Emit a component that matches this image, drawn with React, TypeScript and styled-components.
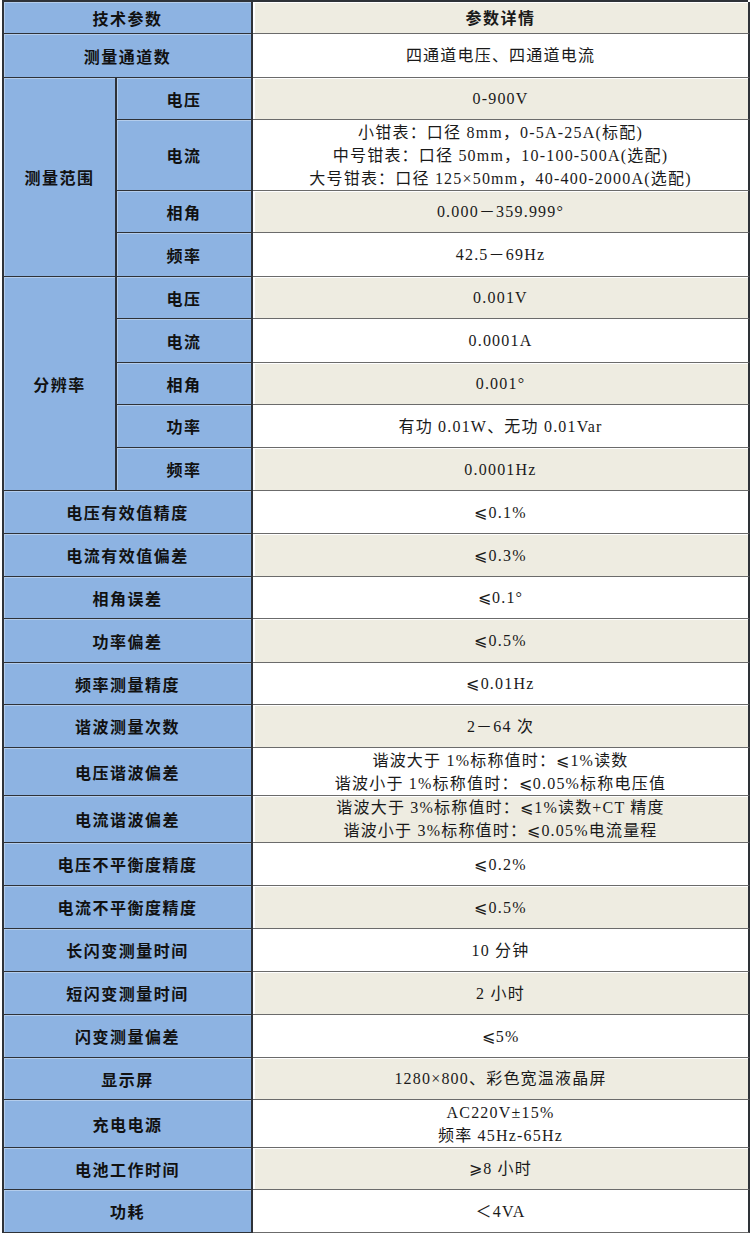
import styled, { createGlobalStyle } from "styled-components";

const COLORS = {
  blue: "#8DB3E2",
  beige: "#EEECE1",
  white: "#FFFFFF",
  line: "#2E3238",
  text: "#111111",
};

const GlobalStyle = createGlobalStyle`
  html, body {
    margin: 0;
    padding: 0;
    background: #ffffff;
  }
`;

// heights measured between the horizontal rules
const ROW_HEIGHTS = [
  32, 44, 42, 71, 42, 44, 42, 44, 42, 43, 43, 43, 43, 42, 44, 42, 43, 48, 47,
  43, 43, 43, 43, 43, 42, 48, 42, 43,
];

type Item = { label: string; value: string[] };
type Row =
  | ({ kind: "single" } & Item)
  | { kind: "group"; label: string; items: Item[] };

const ROWS: Row[] = [
  { kind: "single", label: "测量通道数", value: ["四通道电压、四通道电流"] },
  {
    kind: "group",
    label: "测量范围",
    items: [
      { label: "电压", value: ["0-900V"] },
      {
        label: "电流",
        value: [
          "小钳表：口径 8mm，0-5A-25A(标配)",
          "中号钳表：口径 50mm，10-100-500A(选配)",
          "大号钳表：口径 125×50mm，40-400-2000A(选配)",
        ],
      },
      { label: "相角", value: ["0.000－359.999°"] },
      { label: "频率", value: ["42.5－69Hz"] },
    ],
  },
  {
    kind: "group",
    label: "分辨率",
    items: [
      { label: "电压", value: ["0.001V"] },
      { label: "电流", value: ["0.0001A"] },
      { label: "相角", value: ["0.001°"] },
      { label: "功率", value: ["有功 0.01W、无功 0.01Var"] },
      { label: "频率", value: ["0.0001Hz"] },
    ],
  },
  { kind: "single", label: "电压有效值精度", value: ["⩽0.1%"] },
  { kind: "single", label: "电流有效值偏差", value: ["⩽0.3%"] },
  { kind: "single", label: "相角误差", value: ["⩽0.1°"] },
  { kind: "single", label: "功率偏差", value: ["⩽0.5%"] },
  { kind: "single", label: "频率测量精度", value: ["⩽0.01Hz"] },
  { kind: "single", label: "谐波测量次数", value: ["2－64 次"] },
  {
    kind: "single",
    label: "电压谐波偏差",
    value: ["谐波大于 1%标称值时：⩽1%读数", "谐波小于 1%标称值时：⩽0.05%标称电压值"],
  },
  {
    kind: "single",
    label: "电流谐波偏差",
    value: ["谐波大于 3%标称值时：⩽1%读数+CT 精度", "谐波小于 3%标称值时：⩽0.05%电流量程"],
  },
  { kind: "single", label: "电压不平衡度精度", value: ["⩽0.2%"] },
  { kind: "single", label: "电流不平衡度精度", value: ["⩽0.5%"] },
  { kind: "single", label: "长闪变测量时间", value: ["10 分钟"] },
  { kind: "single", label: "短闪变测量时间", value: ["2 小时"] },
  { kind: "single", label: "闪变测量偏差", value: ["⩽5%"] },
  { kind: "single", label: "显示屏", value: ["1280×800、彩色宽温液晶屏"] },
  { kind: "single", label: "充电电源", value: ["AC220V±15%", "频率 45Hz-65Hz"] },
  { kind: "single", label: "电池工作时间", value: ["⩾8 小时"] },
  { kind: "single", label: "功耗", value: ["＜4VA"] },
];

const Sheet = styled.div`
  display: grid;
  grid-template-columns: 113px 136px 497px;
  grid-template-rows: ${ROW_HEIGHTS.map((h) => `${h}px`).join(" ")};
  width: 746px;
  margin: 0 2px;
  border-top: 2px solid ${COLORS.line};
  border-left: 2px solid ${COLORS.line};
  box-sizing: border-box;
`;

const Cell = styled.div`
  box-sizing: border-box;
  display: flex;
  flex-direction: column;
  align-items: center;
  justify-content: center;
  border-right: 2px solid ${COLORS.line};
  border-bottom: 1px solid ${COLORS.line};
  text-align: center;
  white-space: nowrap;
`;

// $span: columns taken (2 = label across both label columns), $rows: rows taken
const LabelCell = styled(Cell)<{ $span?: number; $rows?: number }>`
  grid-column: span ${({ $span }) => $span ?? 1};
  grid-row: span ${({ $rows }) => $rows ?? 1};
  background: ${COLORS.blue};
  box-shadow: inset 1px 1px 0 rgba(255, 255, 255, 0.35);
  color: ${COLORS.text};
  font-family: "Noto Sans CJK SC", "Noto Sans", sans-serif;
  font-weight: 700;
  font-size: 16px;
  letter-spacing: 1.5px;
`;

const ValueCell = styled(Cell)<{ $shade: boolean; $head?: boolean }>`
  background: ${({ $shade }) => ($shade ? COLORS.beige : COLORS.white)};
  box-shadow: inset 2px 1px 0 #ffffff;
  color: #1a1a1a;
  font-family: ${({ $head }) =>
    $head
      ? `"Noto Sans CJK SC", "Noto Sans", sans-serif`
      : `"Liberation Serif", "Noto Sans CJK SC", serif`};
  font-weight: ${({ $head }) => ($head ? 700 : 400)};
  font-size: 16px;
  letter-spacing: ${({ $head }) => ($head ? "1.5px" : "1.2px")};
  line-height: 23px;
  border-bottom-color: #6b6b6b;
`;

const Line = styled.span`
  display: block;
`;

const Value = ({ lines, shade }: { lines: string[]; shade: boolean }) => (
  <ValueCell $shade={shade}>
    {lines.map((line) => (
      <Line key={line}>{line}</Line>
    ))}
  </ValueCell>
);

function App() {
  const cells: React.ReactNode[] = [];
  // header row takes stripe 0, the data rows follow
  let stripe = 1;

  ROWS.forEach((r, i) => {
    if (r.kind === "single") {
      cells.push(
        <LabelCell key={`l${i}`} $span={2}>
          {r.label}
        </LabelCell>,
        <Value key={`v${i}`} lines={r.value} shade={stripe % 2 === 0} />,
      );
      stripe += 1;
      return;
    }
    cells.push(
      <LabelCell key={`g${i}`} $rows={r.items.length}>
        {r.label}
      </LabelCell>,
    );
    r.items.forEach((it, j) => {
      cells.push(
        <LabelCell key={`s${i}-${j}`}>{it.label}</LabelCell>,
        <Value key={`sv${i}-${j}`} lines={it.value} shade={stripe % 2 === 0} />,
      );
      stripe += 1;
    });
  });

  return (
    <>
      <GlobalStyle />
      <Sheet>
        <LabelCell $span={2}>技术参数</LabelCell>
        <ValueCell $shade $head>
          参数详情
        </ValueCell>
        {cells}
      </Sheet>
    </>
  );
}

export default App;
